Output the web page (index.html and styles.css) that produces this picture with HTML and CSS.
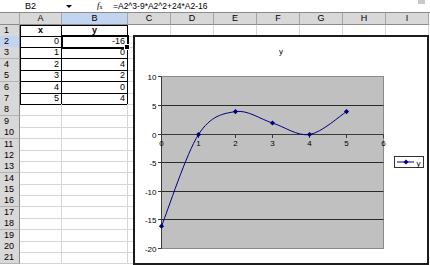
FILE: index.html
```html
<!DOCTYPE html>
<html lang="en">
  <head>
    <meta charset="utf-8">
    <title>Cubic chart</title>
    <link rel="stylesheet" href="styles.css">
  </head>
  <body>
    <div class="formula-bar">
      <div class="name-box">B2</div>
      <div class="drop"><span class="arrow"></span></div>
      <div class="fx"><i>f</i><sub>x</sub></div>
      <div class="formula">=A2^3-9*A2^2+24*A2-16</div>
      <div class="corner"></div>
    </div>

    <div class="sheet">
      <div class="row head">
        <div class="hd"></div>
        <div class="hd">A</div>
        <div class="hd on">B</div>
        <div class="hd">C</div>
        <div class="hd">D</div>
        <div class="hd">E</div>
        <div class="hd">F</div>
        <div class="hd">G</div>
        <div class="hd">H</div>
        <div class="hd">I</div>
      </div>
      <div class="row">
        <div class="rh">1</div>
        <div class="c t ta top lbl">x</div>
        <div class="c t top lbl">y</div>
        <div class="c"></div><div class="c"></div><div class="c"></div><div class="c"></div><div class="c"></div><div class="c"></div><div class="c"></div>
      </div>
      <div class="row">
        <div class="rh on">2</div>
        <div class="c t ta num">0</div>
        <div class="c t num sel">-16</div>
        <div class="c"></div><div class="c"></div><div class="c"></div><div class="c"></div><div class="c"></div><div class="c"></div><div class="c"></div>
      </div>
      <div class="row">
        <div class="rh">3</div>
        <div class="c t ta num">1</div>
        <div class="c t num">0</div>
        <div class="c"></div><div class="c"></div><div class="c"></div><div class="c"></div><div class="c"></div><div class="c"></div><div class="c"></div>
      </div>
      <div class="row">
        <div class="rh">4</div>
        <div class="c t ta num">2</div>
        <div class="c t num">4</div>
        <div class="c"></div><div class="c"></div><div class="c"></div><div class="c"></div><div class="c"></div><div class="c"></div><div class="c"></div>
      </div>
      <div class="row">
        <div class="rh">5</div>
        <div class="c t ta num">3</div>
        <div class="c t num">2</div>
        <div class="c"></div><div class="c"></div><div class="c"></div><div class="c"></div><div class="c"></div><div class="c"></div><div class="c"></div>
      </div>
      <div class="row">
        <div class="rh">6</div>
        <div class="c t ta num">4</div>
        <div class="c t num">0</div>
        <div class="c"></div><div class="c"></div><div class="c"></div><div class="c"></div><div class="c"></div><div class="c"></div><div class="c"></div>
      </div>
      <div class="row">
        <div class="rh">7</div>
        <div class="c t ta num">5</div>
        <div class="c t num">4</div>
        <div class="c"></div><div class="c"></div><div class="c"></div><div class="c"></div><div class="c"></div><div class="c"></div><div class="c"></div>
      </div>
      <div class="row"><div class="rh">8</div><div class="c"></div><div class="c"></div><div class="c"></div><div class="c"></div><div class="c"></div><div class="c"></div><div class="c"></div><div class="c"></div><div class="c"></div></div>
      <div class="row"><div class="rh">9</div><div class="c"></div><div class="c"></div><div class="c"></div><div class="c"></div><div class="c"></div><div class="c"></div><div class="c"></div><div class="c"></div><div class="c"></div></div>
      <div class="row"><div class="rh">10</div><div class="c"></div><div class="c"></div><div class="c"></div><div class="c"></div><div class="c"></div><div class="c"></div><div class="c"></div><div class="c"></div><div class="c"></div></div>
      <div class="row"><div class="rh">11</div><div class="c"></div><div class="c"></div><div class="c"></div><div class="c"></div><div class="c"></div><div class="c"></div><div class="c"></div><div class="c"></div><div class="c"></div></div>
      <div class="row"><div class="rh">12</div><div class="c"></div><div class="c"></div><div class="c"></div><div class="c"></div><div class="c"></div><div class="c"></div><div class="c"></div><div class="c"></div><div class="c"></div></div>
      <div class="row"><div class="rh">13</div><div class="c"></div><div class="c"></div><div class="c"></div><div class="c"></div><div class="c"></div><div class="c"></div><div class="c"></div><div class="c"></div><div class="c"></div></div>
      <div class="row"><div class="rh">14</div><div class="c"></div><div class="c"></div><div class="c"></div><div class="c"></div><div class="c"></div><div class="c"></div><div class="c"></div><div class="c"></div><div class="c"></div></div>
      <div class="row"><div class="rh">15</div><div class="c"></div><div class="c"></div><div class="c"></div><div class="c"></div><div class="c"></div><div class="c"></div><div class="c"></div><div class="c"></div><div class="c"></div></div>
      <div class="row"><div class="rh">16</div><div class="c"></div><div class="c"></div><div class="c"></div><div class="c"></div><div class="c"></div><div class="c"></div><div class="c"></div><div class="c"></div><div class="c"></div></div>
      <div class="row"><div class="rh">17</div><div class="c"></div><div class="c"></div><div class="c"></div><div class="c"></div><div class="c"></div><div class="c"></div><div class="c"></div><div class="c"></div><div class="c"></div></div>
      <div class="row"><div class="rh">18</div><div class="c"></div><div class="c"></div><div class="c"></div><div class="c"></div><div class="c"></div><div class="c"></div><div class="c"></div><div class="c"></div><div class="c"></div></div>
      <div class="row"><div class="rh">19</div><div class="c"></div><div class="c"></div><div class="c"></div><div class="c"></div><div class="c"></div><div class="c"></div><div class="c"></div><div class="c"></div><div class="c"></div></div>
      <div class="row"><div class="rh">20</div><div class="c"></div><div class="c"></div><div class="c"></div><div class="c"></div><div class="c"></div><div class="c"></div><div class="c"></div><div class="c"></div><div class="c"></div></div>
      <div class="row"><div class="rh">21</div><div class="c"></div><div class="c"></div><div class="c"></div><div class="c"></div><div class="c"></div><div class="c"></div><div class="c"></div><div class="c"></div><div class="c"></div></div>
    </div>

    <!-- floating chart object, sits over C2:I21 -->
    <div class="chart">
      <svg width="292" height="226" viewBox="135 37 292 226">
        <defs>
          <path id="dot" d="M0 -2.6 L2.6 0 L0 2.6 L-2.6 0 Z"/>
        </defs>
        <text class="title" x="281" y="54">y</text>

        <rect class="plot" x="161.5" y="76.5" width="222" height="172"/>
        <g class="grid">
          <line x1="161.5" y1="105.5" x2="383.5" y2="105.5"/>
          <line x1="161.5" y1="162.5" x2="383.5" y2="162.5"/>
          <line x1="161.5" y1="191.5" x2="383.5" y2="191.5"/>
          <line x1="161.5" y1="219.5" x2="383.5" y2="219.5"/>
        </g>
        <g class="axis">
          <line x1="161.5" y1="76.5" x2="161.5" y2="248.5"/>
          <line x1="161.5" y1="134.5" x2="383.5" y2="134.5"/>
          <path d="M158 76.5H161.5M158 105.5H161.5M158 134.5H161.5M158 162.5H161.5M158 191.5H161.5M158 219.5H161.5M158 248.5H161.5"/>
          <path d="M161.5 134.5V138M198.5 134.5V138M235.5 134.5V138M272.5 134.5V138M309.5 134.5V138M346.5 134.5V138M383.5 134.5V138"/>
        </g>
        <g class="ylab">
          <text x="156.5" y="79.5">10</text>
          <text x="156.5" y="108.5">5</text>
          <text x="156.5" y="137.5">0</text>
          <text x="156.5" y="165.5">-5</text>
          <text x="156.5" y="194.5">-10</text>
          <text x="156.5" y="222.5">-15</text>
          <text x="156.5" y="251.5">-20</text>
        </g>
        <g class="xlab">
          <text x="161.5" y="146">0</text>
          <text x="198.5" y="146">1</text>
          <text x="235.5" y="146">2</text>
          <text x="272.5" y="146">3</text>
          <text x="309.5" y="146">4</text>
          <text x="346.5" y="146">5</text>
          <text x="383.5" y="146">6</text>
        </g>

        <path class="curve" d="M161.5 226.2 C167.7 210.9 186.2 153.6 198.5 134.5 C210.8 115.4 223.2 113.5 235.5 111.6 C247.8 109.7 260.2 119.2 272.5 123 C284.8 126.8 297.2 136.4 309.5 134.5 C321.8 132.6 340.3 115.4 346.5 111.6"/>
        <g class="marks">
          <use href="#dot" x="161.5" y="226.2"/>
          <use href="#dot" x="198.5" y="134.5"/>
          <use href="#dot" x="235.5" y="111.6"/>
          <use href="#dot" x="272.5" y="123"/>
          <use href="#dot" x="309.5" y="134.5"/>
          <use href="#dot" x="346.5" y="111.6"/>
        </g>

        <rect class="legend" x="394.5" y="156.5" width="29" height="11"/>
        <line class="curve" x1="397" y1="162" x2="414" y2="162"/>
        <use class="marks" href="#dot" x="406" y="162"/>
        <text class="ltext" x="416.5" y="165.5">y</text>
      </svg>
    </div>
  </body>
</html>
```

FILE: styles.css
```css
body {
  margin: 0;
  width: 430px;
  height: 265px;
  overflow: hidden;
  position: relative;
  background: #fff;
  color: #000;
  font-family: "Liberation Sans", Arial, sans-serif;
  font-size: 9px;
}

/* formula bar */
.formula-bar {
  display: flex;
  align-items: center;
  height: 12px;
  line-height: 12px;
}
.name-box {
  width: 64px;
  padding-left: 25px;
  box-sizing: border-box;
}
.drop {
  width: 30px;
  display: flex;
  align-items: center;
}
.arrow {
  width: 0;
  height: 0;
  margin-left: 2px;
  border-left: 3px solid transparent;
  border-right: 3px solid transparent;
  border-top: 3px solid #000;
}
.fx {
  width: 19px;
  padding-left: 3px;
  box-sizing: border-box;
  font-family: "Liberation Serif", serif;
  font-size: 9px;
}
.fx sub {
  font-size: 6px;
  vertical-align: -1px;
}
.formula {
  flex: 1;
  font-size: 8.5px;
}
.corner {
  width: 7px;
  height: 4px;
  margin: 0 5px 8px 0;
  background: #c8c8c8;
}

/* sheet grid */
.sheet {
  border-top: 1px solid #8c8c8c;
}
.row {
  display: grid;
  grid-template-columns: 20px 42px 66px repeat(7, 43px);
  height: 11.4px;
}
.row.head {
  height: 11.6px;
}
.hd {
  background: #d8d8d8;
  border-right: 1px solid #a6a6a6;
  border-bottom: 1px solid #8c8c8c;
  text-align: center;
  line-height: 11px;
}
.hd.on, .rh.on {
  background: #c2d4f0;
}
.rh {
  background: #d8d8d8;
  border-right: 1px solid #8c8c8c;
  border-bottom: 1px solid #b4b4b4;
  padding-left: 4px;
  line-height: 11px;
  box-sizing: border-box;
}
.c {
  border-right: 1px solid #d6d6d6;
  border-bottom: 1px solid #d6d6d6;
  line-height: 11px;
  box-sizing: border-box;
}
.c.t {
  border-right-color: #000;
  border-bottom-color: #000;
}
.c.ta {
  box-shadow: inset 1px 0 #000;
}
.c.top {
  box-shadow: inset 0 1px #000;
}
.c.ta.top {
  box-shadow: inset 1px 1px #000;
}
.lbl {
  text-align: center;
  font-weight: bold;
}
.num {
  text-align: right;
  padding-right: 2px;
}
.sel {
  position: relative;
  outline: 2px solid #000;
  outline-offset: -1px;
}
.sel::after {
  content: "";
  position: absolute;
  right: -3px;
  bottom: -3px;
  width: 4px;
  height: 4px;
  background: #000;
  border: 1px solid #fff;
}

/* chart object */
.chart {
  position: absolute;
  left: 133px;
  top: 35px;
  width: 292px;
  height: 226px;
  border: 2px solid #1c1c1c;
  background: #fff;
}
.chart svg {
  display: block;
  font-family: "Liberation Sans", Arial, sans-serif;
  font-size: 8px;
}
.title {
  text-anchor: middle;
}
.plot {
  fill: #c0c0c0;
  stroke: #8a8a8a;
}
.grid line {
  stroke: #2a2a2a;
}
.axis line, .axis path {
  stroke: #3a3a3a;
  fill: none;
}
.ylab text {
  text-anchor: end;
}
.xlab text {
  text-anchor: middle;
}
.curve {
  fill: none;
  stroke: #000080;
  stroke-width: 1;
}
.marks {
  fill: #000080;
}
.legend {
  fill: #fff;
  stroke: #333;
}
.ltext {
  font-size: 8px;
}
```
